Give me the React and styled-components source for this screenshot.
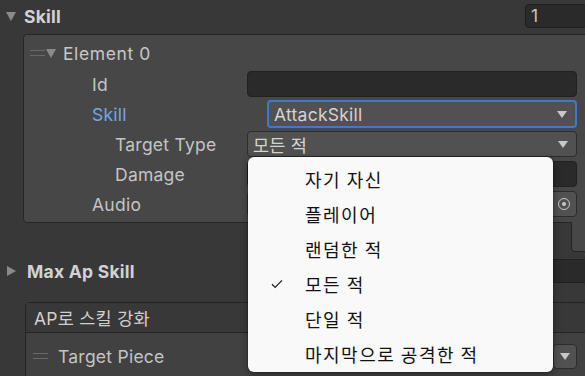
import React from "react";
import styled, { createGlobalStyle } from "styled-components";

const GlobalStyle = createGlobalStyle`
  html, body {
    margin: 0;
    background: #383838;
    overflow: hidden;
  }
  body {
    font-family: Inter, "Noto Sans CJK KR", sans-serif;
  }
`;

const Inspector = styled.div`
  position: relative;
  width: 585px;
  height: 376px;
  overflow: hidden;
  background: #383838;
  color: #c4c4c4;
  font-size: 17.5px;
  letter-spacing: 0.25px;
`;

const Foldout = styled.div`
  display: flex;
  align-items: center;
  height: 26px;
  margin-top: ${p => p.$top || 0}px;
  padding-left: ${p => p.$indent || 6}px;
`;

const Arrow = styled.span`
  width: 0;
  height: 0;
  flex: none;
  ${p =>
    p.$open
      ? `border-left: 5px solid transparent;
         border-right: 5px solid transparent;
         border-top: 9px solid ${p.$color || "#8a8a8a"};`
      : `border-top: 5px solid transparent;
         border-bottom: 5px solid transparent;
         border-left: 9px solid ${p.$color || "#8a8a8a"};`}
`;

const Title = styled.span`
  font-weight: 700;
  color: #d2d2d2;
  margin-left: ${p => p.$gap || 8}px;
  flex: 1;
`;

const SizeField = styled.div`
  width: 70px;
  height: 24px;
  margin-right: -10px;
  box-sizing: border-box;
  background: #2a2a2a;
  border: 1px solid #202020;
  border-radius: 4px;
  padding-left: 5px;
  line-height: 22px;
  color: #c4c4c4;
`;

const ListBox = styled.div`
  margin: 5px -10px 0 23px;
  background: #474747;
  border: 1px solid #262626;
  border-radius: 4px 0 0 4px;
  padding: 5px 0 3px;
  display: flex;
  flex-direction: column;
`;

const Handle = styled.span`
  width: 15px;
  height: 6px;
  flex: none;
  border-top: 1px solid #686868;
  border-bottom: 1px solid #686868;
  box-sizing: border-box;
`;

const ElementHead = styled.div`
  display: flex;
  align-items: center;
  height: 26px;
  margin-bottom: 3px;
  padding-left: 6px;
  gap: 1px;
  color: #c8c8c8;
  & > span:last-child {
    margin-left: 6px;
    letter-spacing: 0.6px;
  }
`;

const Row = styled.div`
  display: flex;
  align-items: center;
  height: 30px;
  padding-right: 17px;
`;

const Label = styled.span`
  width: ${p => 223 - p.$indent}px;
  padding-left: ${p => p.$indent}px;
  flex: none;
  color: ${p => (p.$active ? "#7aa6e0" : "#c4c4c4")};
  white-space: nowrap;
`;

const Field = styled.div`
  position: relative;
  flex: 1;
  margin-left: ${p => p.$offset || 0}px;
  box-sizing: border-box;
  border-radius: 4px;
  display: flex;
  align-items: center;
  padding: 0 8px 0 5px;
  color: #d4d4d4;
  background: ${p => (p.$kind === "dropdown" ? "#515151" : "#2a2a2a")};
  border: ${p =>
    p.$focus
      ? "2px solid #3a7bd0"
      : p.$kind === "dropdown"
      ? "1px solid #2c2c2c"
      : "1px solid #212121"};
  height: ${p => (p.$focus ? 28 : 26)}px;
`;

const FieldText = styled.span`
  flex: 1;
  white-space: nowrap;
`;

const DropArrow = styled.span`
  width: 0;
  height: 0;
  border-left: 5px solid transparent;
  border-right: 5px solid transparent;
  border-top: 7px solid #c8c8c8;
`;

const Picker = styled.span`
  width: 10px;
  height: 10px;
  border: 1.5px solid #c8c8c8;
  border-radius: 50%;
  display: flex;
  align-items: center;
  justify-content: center;
  margin-right: -2px;
  &::after {
    content: "";
    width: 4px;
    height: 4px;
    border-radius: 50%;
    background: #c8c8c8;
  }
`;

const FooterRow = styled.div`
  display: flex;
  justify-content: flex-end;
  margin-top: -1px;
`;

const Footer = styled.div`
  width: 40px;
  height: 29px;
  margin-right: -28px;
  background: #474747;
  border: 1px solid #262626;
  border-top: none;
  border-radius: 0 0 4px 4px;
`;

const GroupBox = styled.div`
  margin: 18px -10px 0 25px;
  border: 1px solid #242424;
  border-radius: 4px 0 0 0;
  background: #414141;
`;

const GroupHead = styled.div`
  height: 29px;
  background: #383838;
  border-bottom: 1px solid #242424;
  padding-left: 8px;
  display: flex;
  align-items: center;
  color: #d0d0d0;
`;

const GroupRow = styled.div`
  display: flex;
  align-items: center;
  height: 46px;
  padding: 0 17px 0 7px;
  gap: 10px;
`;

const GroupLabel = styled.span`
  flex: 1;
  color: #c4c4c4;
`;

const SmallDrop = styled.div`
  width: 24px;
  height: 25px;
  box-sizing: border-box;
  background: #515151;
  border: 1px solid #2c2c2c;
  border-radius: 4px;
  display: flex;
  align-items: center;
  justify-content: center;
`;

const Menu = styled.div`
  position: absolute;
  left: 248px;
  top: 157px;
  width: 305px;
  height: 215px;
  box-sizing: border-box;
  padding-top: 4px;
  background: #f9f9f9;
  border-radius: 6px;
  box-shadow: 0 0 0 1px rgba(0, 0, 0, 0.15), 0 3px 8px rgba(0, 0, 0, 0.35);
`;

const MenuItem = styled.div`
  display: flex;
  align-items: center;
  height: 35px;
  color: #111;
  font-family: "Noto Sans CJK KR", sans-serif;
  font-size: 18px;
  letter-spacing: 1.5px;
`;

const Check = styled.span`
  width: 57px;
  flex: none;
  display: flex;
  justify-content: center;
  padding-left: 1px;
  box-sizing: border-box;
`;

const options = ["자기 자신", "플레이어", "랜덤한 적", "모든 적", "단일 적", "마지막으로 공격한 적"];

const CheckIcon = () => (
  <svg width="12" height="10" viewBox="0 0 12 10">
    <path d="M1 5.2 L4.2 8.4 L11 1.4" fill="none" stroke="#222" strokeWidth="1.3" />
  </svg>
);

export default function App() {
  return (
    <Inspector>
      <GlobalStyle />
      <Foldout $top={3}>
        <Arrow $open />
        <Title>Skill</Title>
        <SizeField>1</SizeField>
      </Foldout>

      <ListBox>
        <ElementHead>
          <Handle />
          <Arrow $open />
          <span>Element 0</span>
        </ElementHead>
        <Row>
          <Label $indent={68}>Id</Label>
          <Field />
        </Row>
        <Row>
          <Label $indent={68} $active>Skill</Label>
          <Field $kind="dropdown" $focus $offset={20}>
            <FieldText>AttackSkill</FieldText>
            <DropArrow />
          </Field>
        </Row>
        <Row>
          <Label $indent={91}>Target Type</Label>
          <Field $kind="dropdown">
            <FieldText>모든 적</FieldText>
            <DropArrow />
          </Field>
        </Row>
        <Row>
          <Label $indent={91}>Damage</Label>
          <Field />
        </Row>
        <Row>
          <Label $indent={68}>Audio</Label>
          <Field $kind="dropdown">
            <FieldText />
            <Picker />
          </Field>
        </Row>
      </ListBox>
      <FooterRow>
        <Footer />
      </FooterRow>

      <Foldout $top={6} $indent={7}>
        <Arrow />
        <Title $gap={11}>Max Ap Skill</Title>
        <SizeField />
      </Foldout>

      <GroupBox>
        <GroupHead>AP로 스킬 강화</GroupHead>
        <GroupRow>
          <Handle />
          <GroupLabel>Target Piece</GroupLabel>
          <SmallDrop>
            <DropArrow />
          </SmallDrop>
        </GroupRow>
      </GroupBox>

      <Menu>
        {options.map(o => (
          <MenuItem key={o}>
            <Check>{o === "모든 적" && <CheckIcon />}</Check>
            {o}
          </MenuItem>
        ))}
      </Menu>
    </Inspector>
  );
}
